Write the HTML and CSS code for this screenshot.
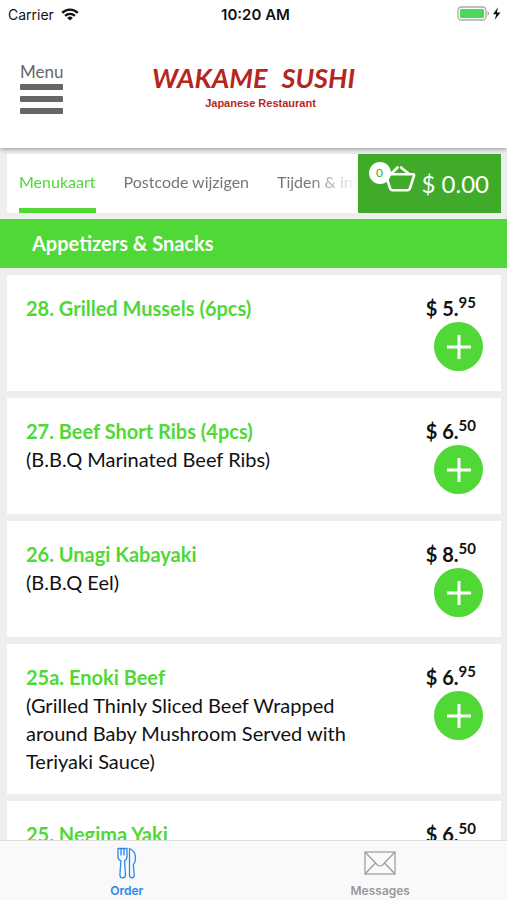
FILE: index.html
```html
<!DOCTYPE html>
<html lang="nl">
<head>
    <meta charset="UTF-8">
    <meta name="viewport" content="width=device-width, initial-scale=1.0">
    <title>Wakame Sushi</title>
    <link rel="stylesheet" href="styles.css">
</head>
<body>
    <div class="status-bar">
        <div class="carrier">
            <span>Carrier</span>
            <svg width="18" height="13" viewBox="0 0 18 13" fill="none" stroke="#111" stroke-width="2.4">
                <path d="M1.2 4.8a11.2 11.2 0 0 1 15.6 0"/>
                <path d="M4.1 7.9a7 7 0 0 1 9.8 0"/>
                <path d="M9 12.6L6.2 9.9a4 4 0 0 1 5.6 0z" fill="#111" stroke="none"/>
            </svg>
        </div>
        <span class="time">10:20 AM</span>
        <div class="battery">
            <svg width="46" height="16" viewBox="0 0 46 16">
                <rect x="1" y="1" width="28" height="13" rx="3.5" fill="#fff" stroke="#aaa" stroke-width="1.3"/>
                <rect x="3" y="3" width="24" height="9" rx="1" fill="#4cd75f"/>
                <path d="M30.6 5.3q3 2.2 0 4.4z" fill="#999"/>
                <path d="M41 1.300L36 8.300h3.200l-1.400 5.400 5.700-7.200h-3.600z" fill="#111"/>
            </svg>
        </div>
    </div>

    <header class="header">
        <button class="menu-btn">
            <span>Menu</span>
            <svg width="44" height="32" viewBox="0 0 44 32" fill="#666">
                <rect x="0" y="0" width="43" height="6" rx="1"/>
                <rect x="0" y="12" width="43" height="6" rx="1"/>
                <rect x="0" y="24" width="43" height="6" rx="1"/>
            </svg>
        </button>
        <div class="logo">
            <div class="logo-name"><span>WAKAME</span> <span>SUSHI</span></div>
            <div class="logo-sub">Japanese Restaurant</div>
        </div>
    </header>

    <div class="top-row">
        <nav class="tabs">
            <a class="tab active" href="#menukaart">Menukaart</a>
            <a class="tab" href="#postcode">Postcode wijzigen</a>
            <a class="tab" href="#info">Tijden &amp; info</a>
        </nav>
        <button class="cart-btn">
            <span class="cart-icon">
                <svg width="32" height="30" viewBox="0 0 32 30" fill="none" stroke="#fff" stroke-width="2.6" stroke-linejoin="round" stroke-linecap="round">
                    <path d="M3 9.200h26q1.400 0 1 1.400l-4 12.600q-.6 2-2.800 2H8.800q-2.200 0-2.800-2L2 10.600q-.4-1.400 1-1.400z"/>
                    <path d="M8 8l5.500-5.500M24 8l-7-5.500"/>
                </svg>
                <span class="cart-count">0</span>
            </span>
            <span>$ 0.00</span>
        </button>
    </div>

    <main class="menu" id="menukaart">
        <h2 class="category">Appetizers &amp; Snacks</h2>

        <article class="item">
            <div class="item-text">
                <h3>28. Grilled Mussels (6pcs)</h3>
            </div>
            <div class="item-buy">
                <div class="price">$ 5.<sup>95</sup></div>
                <button class="add-btn" aria-label="28. Grilled Mussels"><svg width="26" height="26" viewBox="0 0 26 26"><path d="M13 1v24M1 13h24"/></svg></button>
            </div>
        </article>

        <article class="item">
            <div class="item-text">
                <h3>27. Beef Short Ribs (4pcs)</h3>
                <p>(B.B.Q Marinated Beef Ribs)</p>
            </div>
            <div class="item-buy">
                <div class="price">$ 6.<sup>50</sup></div>
                <button class="add-btn" aria-label="27. Beef Short Ribs"><svg width="26" height="26" viewBox="0 0 26 26"><path d="M13 1v24M1 13h24"/></svg></button>
            </div>
        </article>

        <article class="item">
            <div class="item-text">
                <h3>26. Unagi Kabayaki</h3>
                <p>(B.B.Q Eel)</p>
            </div>
            <div class="item-buy">
                <div class="price">$ 8.<sup>50</sup></div>
                <button class="add-btn" aria-label="26. Unagi Kabayaki"><svg width="26" height="26" viewBox="0 0 26 26"><path d="M13 1v24M1 13h24"/></svg></button>
            </div>
        </article>

        <article class="item">
            <div class="item-text">
                <h3>25a. Enoki Beef</h3>
                <p>(Grilled Thinly Sliced Beef Wrapped around Baby Mushroom Served with Teriyaki Sauce)</p>
            </div>
            <div class="item-buy">
                <div class="price">$ 6.<sup>95</sup></div>
                <button class="add-btn" aria-label="25a. Enoki Beef"><svg width="26" height="26" viewBox="0 0 26 26"><path d="M13 1v24M1 13h24"/></svg></button>
            </div>
        </article>

        <article class="item">
            <div class="item-text">
                <h3>25. Negima Yaki</h3>
            </div>
            <div class="item-buy">
                <div class="price">$ 6.<sup>50</sup></div>
                <button class="add-btn" aria-label="25. Negima Yaki"><svg width="26" height="26" viewBox="0 0 26 26"><path d="M13 1v24M1 13h24"/></svg></button>
            </div>
        </article>
    </main>

    <nav class="bottom-bar">
        <a class="bottom-link active" href="#order">
            <svg width="20" height="32" viewBox="0 0 20 32" fill="none" stroke="#2f86ea" stroke-width="1.3" stroke-linejoin="round">
                <path d="M1 1.500h9v8q0 3-2.500 4.300l1 14q0 3-2.800 3t-2.800-3l1-14Q1 12.500 1 9.500z"/>
                <path d="M4 1.500v7M7 1.500v7"/>
                <path d="M12.500 1.500q6 2.500 6 9.500 0 4-2.200 7l1 10q0 2.800-2.400 2.800t-2.400-2.800z"/>
            </svg>
            <span>Order</span>
        </a>
        <a class="bottom-link" href="#messages">
            <svg width="32" height="32" viewBox="0 0 32 32" fill="none" stroke="#999" stroke-width="1.200">
                <rect x="1" y="5" width="30" height="22"/>
                <path d="M1 5l12.500 13q2.500 2 5 0L31 5M1 27l10.500-11M31 27L20.500 16"/>
            </svg>
            <span>Messages</span>
        </a>
    </nav>
</body>
</html>
```
FILE: styles.css
```css
* {
    box-sizing: border-box;
}

body {
    margin: 0;
    height: 100vh;
    display: flex;
    flex-direction: column;
    background-color: #eee;
    font-family: Lato, "Open Sans", sans-serif;
    color: #111;
}

button {
    border: none;
    padding: 0;
    background: none;
    font-family: inherit;
    cursor: pointer;
}

a {
    text-decoration: none;
}

svg {
    display: block;
}

h2, h3, p {
    margin: 0;
}

.status-bar {
    display: grid;
    grid-template-columns: 1fr auto 1fr;
    align-items: center;
    height: 28px;
    padding: 0 4px 0 8px;
    background-color: #fff;
    font-family: Inter, sans-serif;
    font-size: 14px;
    z-index: 2;
}

.carrier {
    display: flex;
    align-items: center;
    gap: 7px;
}

.time {
    font-size: 15px;
    font-weight: 600;
}

.battery {
    justify-self: end;
}

.header {
    display: grid;
    grid-template-columns: 1fr auto 1fr;
    align-items: start;
    height: 120px;
    flex-shrink: 0;
    padding: 32px 20px 0;
    background-color: #fff;
    box-shadow: 0 1px 5px rgba(0, 0, 0, 0.4);
    z-index: 1;
}

.menu-btn {
    justify-self: start;
    color: #666;
    font-size: 17px;
    line-height: 24px;
    text-align: left;
}

.logo {
    color: #b5271e;
    text-align: center;
}

.logo-name {
    display: flex;
    gap: 14px;
    font-size: 27px;
    font-weight: bold;
    font-style: italic;
    line-height: 36px;
}

.logo-sub {
    padding-left: 14px;
    font-family: "Liberation Sans", Arial, sans-serif;
    font-size: 11px;
    font-weight: bold;
    line-height: 14px;
}

.top-row {
    display: flex;
    flex-shrink: 0;
    height: 59px;
    margin: 6px 6px 6px 7px;
    background-color: #fff;
}

.tabs {
    display: flex;
    flex: 1;
    gap: 28px;
    min-width: 0;
    padding-left: 12px;
    overflow: hidden;
    -webkit-mask-image: linear-gradient(to left, transparent, #000 50px);
    mask-image: linear-gradient(to left, transparent, #000 50px);
}

.tab {
    flex-shrink: 0;
    color: #777;
    font-size: 16px;
    line-height: 55px;
    white-space: nowrap;
    border-bottom: 5px solid transparent;
}

.tab.active {
    color: #50d836;
    border-bottom-color: #50d836;
}

.cart-btn {
    display: flex;
    align-items: center;
    justify-content: flex-end;
    gap: 6px;
    width: 143px;
    padding-right: 12px;
    background-color: #40ab2b;
    color: #fff;
    font-size: 24px;
}

.cart-icon {
    position: relative;
    margin-bottom: 8px;
}

.cart-count {
    position: absolute;
    top: -3px;
    left: -15px;
    width: 22px;
    height: 22px;
    border-radius: 50%;
    background-color: #fff;
    color: #40ab2b;
    font-size: 12px;
    line-height: 22px;
}

.menu {
    flex: 1;
    min-height: 0;
    overflow-y: auto;
    scrollbar-width: none;
}

.category {
    padding: 0 32px;
    background-color: #50d836;
    color: #fff;
    font-size: 20px;
    line-height: 49px;
}

.item {
    display: flex;
    justify-content: space-between;
    min-height: 116px;
    margin: 7px 6px 7px 7px;
    padding: 19px 18px 19px 19px;
    background-color: #fff;
    font-size: 20px;
    line-height: 28px;
}

.item-text {
    max-width: 330px;
}

.item h3 {
    color: #50d836;
    font-size: 20px;
}

.item-buy {
    display: flex;
    flex-direction: column;
    align-items: flex-end;
}

.price {
    padding-right: 7px;
    font-size: 20px;
    font-weight: bold;
}

.price sup {
    font-size: 15px;
    line-height: 0;
}

.add-btn {
    display: flex;
    align-items: center;
    justify-content: center;
    width: 49px;
    height: 49px;
    border-radius: 50%;
    background-color: #50d836;
}

.add-btn path {
    stroke: #fff;
    stroke-width: 3;
}

.bottom-bar {
    display: flex;
    flex-shrink: 0;
    height: 60px;
    border-top: 1px solid #ddd;
    background-color: #f9f9f9;
    font-family: Inter, sans-serif;
}

.bottom-link {
    display: flex;
    flex: 1;
    flex-direction: column;
    align-items: center;
    gap: 4px;
    padding-top: 6px;
    color: #999;
    font-size: 12px;
    font-weight: 600;
    line-height: 16px;
}

.bottom-link.active {
    color: #2f86ea;
}
```
